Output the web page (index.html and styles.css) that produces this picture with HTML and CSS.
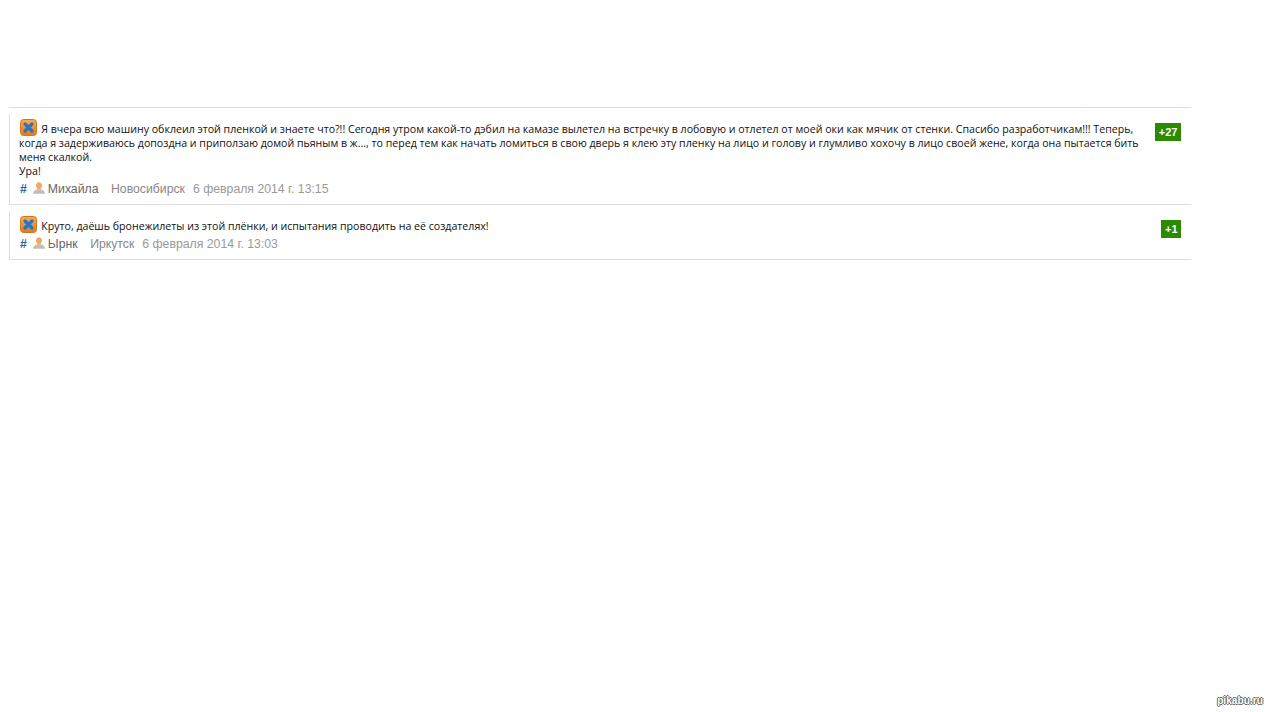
FILE: index.html
```html
<!DOCTYPE html>
<html lang="ru">
<head>
    <meta charset="UTF-8">
    <meta name="viewport" content="width=device-width, initial-scale=1.0">
    <title>Комментарии</title>
    <link rel="stylesheet" href="styles.css">
</head>
<body>
    <svg class="svg-defs" width="0" height="0">
        <defs>
            <linearGradient id="avatarFill" x1="0" y1="0" x2="0" y2="1">
                <stop offset="0" stop-color="#fbaa4c"/>
                <stop offset="1" stop-color="#e8781a"/>
            </linearGradient>
            <symbol id="avatarIcon" viewBox="0 0 17 17">
                <rect x="0.5" y="0.5" width="16" height="16" rx="3" fill="url(#avatarFill)" stroke="#d0781f"/>
                <path d="M5 5l7 7M12 5l-7 7" stroke="#1f78cc" stroke-width="3.2" stroke-linecap="round"/>
            </symbol>
            <symbol id="userIcon" viewBox="0 0 12 12">
                <path d="M6 0.2c1.800 0 3 1.300 3 3.200 0 1.300-.6 2.400-1.300 3v1.300h-3.400v-1.300c-.7-.6-1.300-1.700-1.300-3 0-1.900 1.200-3.200 3-3.200z" fill="#f2a765"/>
                <path d="M0.200 11.800c0-2.500 1.600-3.600 3.800-4.200h4c2.200 .6 3.800 1.700 3.800 4.200z" fill="#bdbdbd" stroke="#f2c69c" stroke-width="0.4"/>
            </symbol>
        </defs>
    </svg>

    <div class="comments">
        <div class="comment comment-long">
            <div class="comment-body">
                <p class="comment-text">
                    <svg class="avatar"><use href="#avatarIcon"/></svg>
                    Я вчера всю машину обклеил этой пленкой и знаете что?!! Сегодня утром какой-то дэбил на камазе вылетел на встречку в лобовую и отлетел от моей оки как мячик от стенки. Спасибо разработчикам!!! Теперь, когда я задерживаюсь допоздна и приползаю домой пьяным в ж..., то перед тем как начать ломиться в свою дверь я клею эту пленку на лицо и голову и глумливо хохочу в лицо своей жене, когда она пытается бить меня скалкой.<br>Ура!
                </p>
                <div class="comment-meta">
                    <span class="hash">#</span>
                    <svg class="user-icon"><use href="#userIcon"/></svg>
                    <span class="author">Михайла</span>
                    <span class="city">Новосибирск</span>
                    <span class="date">6 февраля 2014 г. 13:15</span>
                </div>
            </div>
            <div class="rating">+27</div>
        </div>
        <div class="comment comment-short">
            <div class="comment-body">
                <p class="comment-text">
                    <svg class="avatar"><use href="#avatarIcon"/></svg>
                    Круто, даёшь бронежилеты из этой плёнки, и испытания проводить на её создателях!
                </p>
                <div class="comment-meta">
                    <span class="hash">#</span>
                    <svg class="user-icon"><use href="#userIcon"/></svg>
                    <span class="author">Ырнк</span>
                    <span class="city">Иркутск</span>
                    <span class="date">6 февраля 2014 г. 13:03</span>
                </div>
            </div>
            <div class="rating">+1</div>
        </div>
    </div>
    <div class="watermark">pikabu.ru</div>
</body>
</html>
```

FILE: styles.css
```css
* {
    margin: 0;
    padding: 0;
    box-sizing: border-box;
}

body {
    background: #fff;
    font-family: "Open Sans", "Noto Sans", sans-serif;
    height: 712px;
    overflow: hidden;
    position: relative;
}

.svg-defs {
    display: block;
}

.comments {
    width: 1182px;
    margin: 107px 0 0 9px;
    border-top: 1px solid #dedede;
    padding-top: 6px;
}

.comment {
    display: flex;
    justify-content: space-between;
    align-items: flex-start;
    border-left: 1px solid #dedede;
    border-bottom: 1px solid #dedede;
    padding: 5px 10px 0 9px;
    margin-bottom: 6px;
}

.comment-long {
    height: 91px;
}

.comment-short {
    height: 49px;
}

.comment-body {
    width: 1126px;
}

.comment-text {
    font-size: 10.62px;
    line-height: 14px;
    color: #111;
}

.avatar {
    width: 17px;
    height: 17px;
    vertical-align: -3px;
    margin: 0 1.5px 0 1px;
}

.comment-meta {
    display: flex;
    align-items: center;
    font-family: "Liberation Sans", Arial, sans-serif;
    font-size: 12.25px;
    line-height: 14px;
    margin: 4px 0 0 1px;
}

.hash {
    color: #2a6496;
    font-weight: bold;
    margin-right: 6px;
}

.user-icon {
    width: 12px;
    height: 12px;
    margin-right: 3px;
    margin-top: -3px;
}

.author {
    color: #666;
    margin-right: 12.5px;
}

.city {
    color: #888;
    margin-right: 8px;
}

.date {
    color: #999;
}

.rating {
    background: #2b8a00;
    color: #fff;
    font-family: "Liberation Sans", Arial, sans-serif;
    font-size: 11px;
    font-weight: bold;
    line-height: 18px;
    padding: 0 3.5px;
    margin-top: 4px;
}

.watermark {
    position: absolute;
    right: 4px;
    bottom: 6px;
    font-family: "Liberation Sans", Arial, sans-serif;
    font-size: 10.2px;
    font-weight: bold;
    color: #fff;
    text-shadow: 1px 0 0 #666, -1px 0 0 #666, 0 1px 0 #666, 0 -1px 0 #666;
}
```
